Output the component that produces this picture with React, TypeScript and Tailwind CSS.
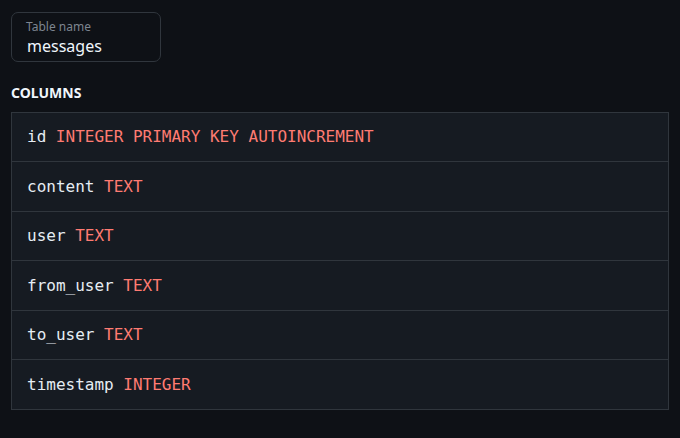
const columns = [
  { name: "id", type: "INTEGER PRIMARY KEY AUTOINCREMENT" },
  { name: "content", type: "TEXT" },
  { name: "user", type: "TEXT" },
  { name: "from_user", type: "TEXT" },
  { name: "to_user", type: "TEXT" },
  { name: "timestamp", type: "INTEGER" },
];

// row heights (border-t included) so the lines land like the reference
const rowH = ["h-[48px]", "h-[50px]", "h-[49px]", "h-[50px]", "h-[49px]", "h-[50px]"];

export default function App() {
  return (
    <div className="min-h-[438px] w-full bg-[#0e1116] px-[11px] pt-[12px] font-['Noto_Sans',sans-serif]">
      {/* Table name field */}
      <div className="flex h-[50px] w-[150px] flex-col justify-center gap-[2px] rounded-[7px] border border-[#30363d] px-[14px] pt-[2px]">
        <label className="text-[12px] leading-[14px] text-[#7d8590]">Table name</label>
        <div className="pl-[1px] text-[16px] leading-[20px] text-[#f0f6fc]">messages</div>
      </div>

      <h3 className="mt-[21px] text-[14px] font-bold leading-[20px] text-[#f0f6fc]">COLUMNS</h3>

      {/* Columns list */}
      <div className="mt-[9px] w-[658px] border border-[#30363d] bg-[#161b22] font-['DejaVu_Sans_Mono',monospace] text-[16px]">
        {columns.map((col, i) => (
          <div
            key={col.name}
            className={`flex items-center px-[15px] ${rowH[i]} ${i > 0 ? "border-t border-[#30363d]" : ""}`}
          >
            <span className="text-[#e6edf3]">{col.name}</span>
            <span className="ml-[9.6px] text-[#ff7b72]">{col.type}</span>
          </div>
        ))}
      </div>
    </div>
  );
}
